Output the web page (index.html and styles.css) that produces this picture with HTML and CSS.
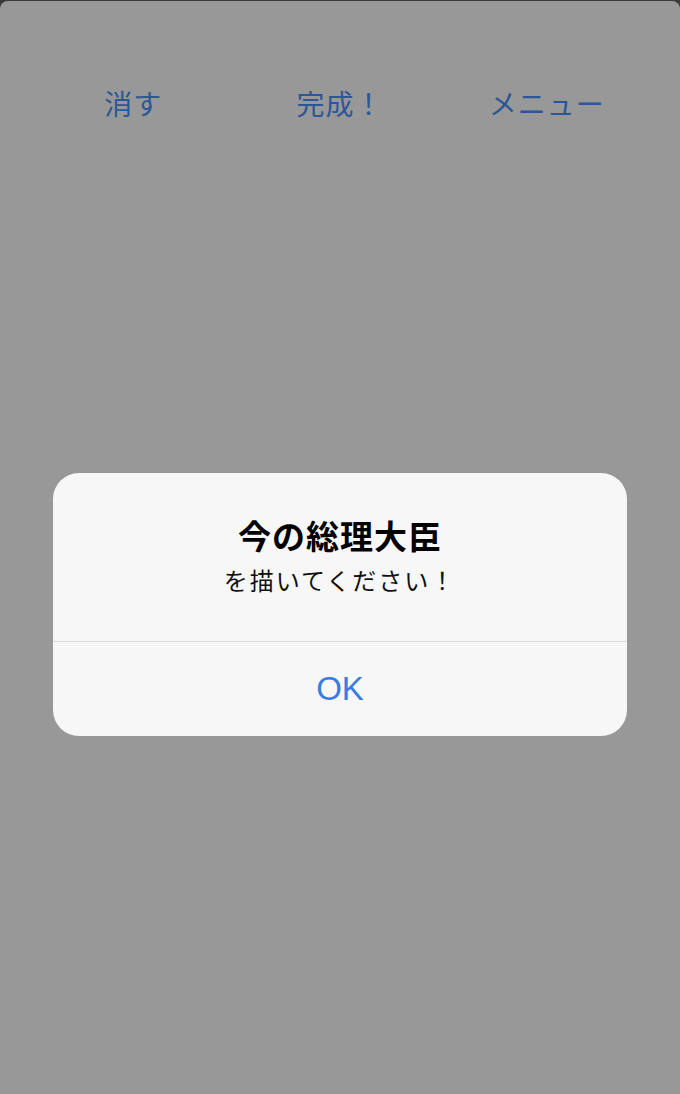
FILE: index.html
```html
<!DOCTYPE html>
<html lang="ja">

<head>
    <meta charset="UTF-8">
    <meta name="viewport" content="width=device-width, initial-scale=1.0">
    <title>お絵かき</title>
    <link rel="stylesheet" href="styles.css">
</head>

<body>
    <div class="screen">
        <nav class="toolbar">
            <span class="tool">消す</span>
            <span class="tool">完成！</span>
            <span class="tool">メニュー</span>
        </nav>

        <div class="alert">
            <div class="alert-body">
                <h1 class="alert-title">今の総理大臣</h1>
                <p class="alert-message">を描いてください！</p>
            </div>
            <button class="alert-button" type="button">OK</button>
        </div>
    </div>
</body>

</html>
```
FILE: styles.css
```css
body {
    margin: 0;
    background-color: #3a3a3a;
    font-family: "Noto Sans CJK JP", "Liberation Sans", sans-serif;
}

.screen {
    margin-top: 1px;
    height: 1093px;
    background-color: #989898;
    border-radius: 8px 8px 0 0;
    overflow: hidden;
}

.toolbar {
    display: grid;
    grid-template-columns: repeat(3, 1fr);
    padding: 82px 30px 0;
}

.tool {
    text-align: center;
    font-size: 28px;
    line-height: 40px;
    letter-spacing: 1px;
    color: #2c5797;
}

.alert {
    width: 574px;
    margin: 350px auto 0;
    background-color: #f7f7f7;
    border-radius: 26px;
    overflow: hidden;
}

.alert-body {
    padding: 42px 20px 45px;
    text-align: center;
    border-bottom: 1px solid #dcdcdc;
}

.alert-title {
    margin: 0;
    font-size: 33px;
    line-height: 40px;
    font-weight: bold;
    letter-spacing: 1px;
    color: #000;
}

.alert-message {
    margin: 9px 0 0;
    font-size: 24px;
    line-height: 32px;
    letter-spacing: 2px;
    color: #111;
}

.alert-button {
    display: block;
    width: 100%;
    height: 94px;
    padding: 0;
    border: none;
    background: none;
    font-family: "Liberation Sans", sans-serif;
    font-size: 33px;
    color: #3a7ce2;
    cursor: pointer;
}
```
